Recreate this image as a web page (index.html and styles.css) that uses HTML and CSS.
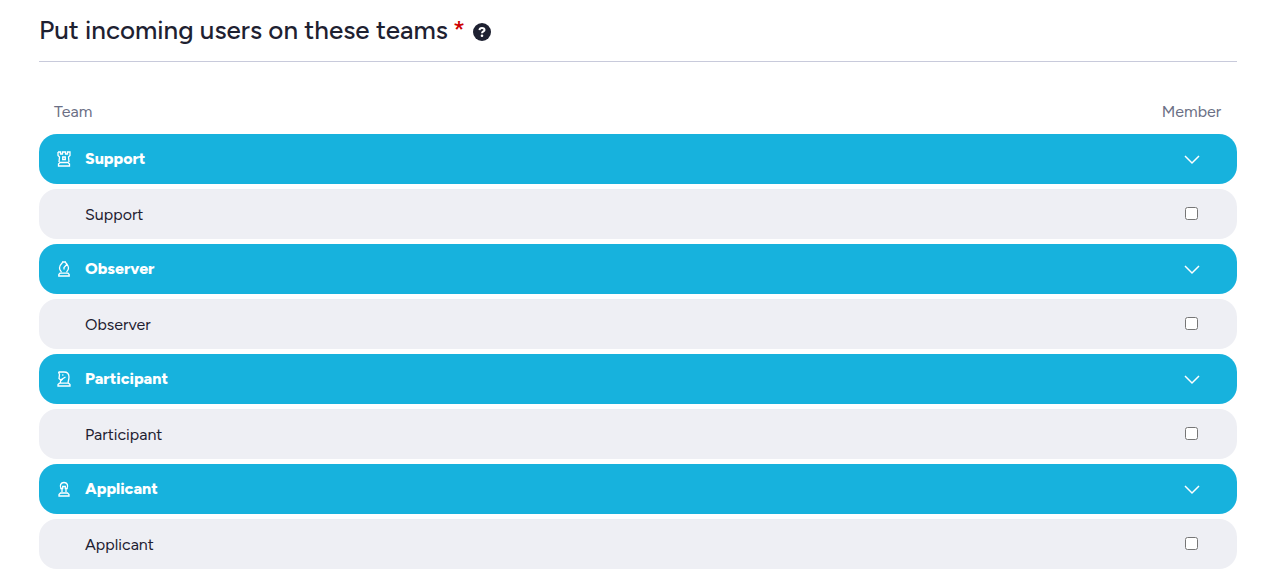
FILE: index.html
```html
<!DOCTYPE html>
<html lang="en">
<head>
  <meta charset="utf-8">
  <title>Incoming users</title>
  <link rel="stylesheet" href="styles.css">
</head>
<body>
  <div class="container">
    <div class="header">
      <h1>Put incoming users on these teams</h1>
      <span class="required">*</span>
      <button type="button" class="help" aria-label="Help">
        <svg viewBox="0 0 18 18" width="18" height="18">
          <circle cx="9" cy="9" r="9" fill="#1e2131"/>
          <path d="M6.500 7.100C6.600 5.500 7.700 4.900 9 4.900s2.500.7 2.500 2C11.500 8.500 9 8.400 9 10.300" fill="none" stroke="#fff" stroke-width="2"/>
          <circle cx="9" cy="12.700" r="1.300" fill="#fff"/>
        </svg>
      </button>
    </div>

    <table class="teams">
      <thead>
        <tr>
          <th class="team-col">Team</th>
          <th class="member-col">Member</th>
        </tr>
      </thead>
      <tbody>
        <tr class="group">
          <th>
            <div class="team-name">
              <svg class="icon" viewBox="0 0 14 16">
                <path d="M1 1h2.500v2h2V1h3v2h2V1H13v3.500L11.500 6l.5 5M1 1v3.500L2.500 6 2 11M5.700 8.500V6h2.600v2.500zM3 11.500h8l1.500 1.500v2h-11v-2z"/>
              </svg>
              Support
            </div>
          </th>
          <td>
            <button type="button" class="toggle" aria-label="Toggle Support teams">
              <svg viewBox="0 0 16 10"><path d="M1 1l7 7 7-7"/></svg>
            </button>
          </td>
        </tr>
        <tr class="team">
          <td><label for="support">Support</label></td>
          <td><input type="checkbox" id="support"></td>
        </tr>

        <tr class="group">
          <th>
            <div class="team-name">
              <svg class="icon" viewBox="0 0 14 16">
                <path d="M5 1h4M5.500 1.500C3.500 3.500 2.500 5 2.500 7c0 1.700.6 2.800 2 4M8.500 1.500L10 3.200 7 6.500v2M10.200 3.500C11 4.700 11.500 5.800 11.500 7c0 1.700-.6 2.800-2 4M3 12.200h8l1.200 1.300V15H1.800v-1.500z"/>
              </svg>
              Observer
            </div>
          </th>
          <td>
            <button type="button" class="toggle" aria-label="Toggle Observer teams">
              <svg viewBox="0 0 16 10"><path d="M1 1l7 7 7-7"/></svg>
            </button>
          </td>
        </tr>
        <tr class="team">
          <td><label for="observer">Observer</label></td>
          <td><input type="checkbox" id="observer"></td>
        </tr>

        <tr class="group">
          <th>
            <div class="team-name">
              <svg class="icon" viewBox="0 0 14 16">
                <path d="M1.500 1H7c3.500 0 5 2 5 5 0 2-.5 3.500-1 5.500M1.500 1l1 2.500L2 7.500 3.500 9 8.500 6M5.200 4h1.200M6 7.800L3.500 10v1.500M2.500 12.200h9L13 13.500V15H1v-1.500z"/>
              </svg>
              Participant
            </div>
          </th>
          <td>
            <button type="button" class="toggle" aria-label="Toggle Participant teams">
              <svg viewBox="0 0 16 10"><path d="M1 1l7 7 7-7"/></svg>
            </button>
          </td>
        </tr>
        <tr class="team">
          <td><label for="participant">Participant</label></td>
          <td><input type="checkbox" id="participant"></td>
        </tr>

        <tr class="group">
          <th>
            <div class="team-name">
              <svg class="icon" viewBox="0 0 14 16">
                <path d="M4 7.500C2.500 4.500 3.700 1.500 7 1.500s4.500 3 3 6M3.200 7.500h2.500V5.500h2.600v2h2.500M5 7.500V11M9 7.500V11M3.500 12h7l1.500 1.500V15H2v-1.500z"/>
              </svg>
              Applicant
            </div>
          </th>
          <td>
            <button type="button" class="toggle" aria-label="Toggle Applicant teams">
              <svg viewBox="0 0 16 10"><path d="M1 1l7 7 7-7"/></svg>
            </button>
          </td>
        </tr>
        <tr class="team">
          <td><label for="applicant">Applicant</label></td>
          <td><input type="checkbox" id="applicant"></td>
        </tr>
      </tbody>
    </table>
  </div>
</body>
</html>
```
FILE: styles.css
```css
:root {
  --accent: #17b2dd;
  --row-bg: #eeeff4;
  --text-dark: #1e2131;
  --text-muted: #6b6f85;
  --line: #c8cadb;
}

body {
  font-family: Figtree, Lato, "Liberation Sans", sans-serif;
  font-size: 16px;
  line-height: 24px;
  color: var(--text-dark);
  background-color: #fff;
  margin: 0;
}

.container {
  padding: 12px 36px 8px 39px;
}

.header {
  display: flex;
  align-items: center;
  padding-bottom: 13px;
  border-bottom: 1px solid var(--line);
  margin-bottom: 32px;
}

h1 {
  font-size: 26px;
  line-height: 36px;
  font-weight: 500;
  margin: 0;
}

.required {
  color: #c00;
  font-size: 26px;
  line-height: 36px;
  font-weight: 500;
  margin-left: 5px;
}

.help {
  display: flex;
  padding: 4px 0 0;
  border: 0;
  background: none;
  margin-left: 8px;
}

.teams {
  width: 100%;
  border-collapse: separate;
  border-spacing: 0 5px;
}

.teams th,
.teams td {
  padding: 0;
  text-align: left;
}

.teams thead th {
  height: 30px;
  line-height: 26px;
  vertical-align: top;
  color: var(--text-muted);
  font-weight: 400;
}

.teams .team-col {
  padding-left: 15px;
}

.teams .member-col {
  width: 91px;
}

.teams tr > :last-child {
  text-align: center;
}

.group > *,
.team > * {
  height: 50px;
}

.group > * {
  background-color: var(--accent);
  color: #fff;
}

.team > * {
  background-color: var(--row-bg);
}

tbody tr > :first-child {
  border-radius: 18px 0 0 18px;
}

tbody tr > :last-child {
  border-radius: 0 18px 18px 0;
}

.team-name {
  display: flex;
  align-items: center;
  gap: 14px;
  padding-left: 18px;
  font-weight: 800;
}

.icon {
  width: 14px;
  height: 16px;
  fill: none;
  stroke: #fff;
  stroke-width: 1.3;
}

.team label {
  display: block;
  padding: 2px 0 0 46px;
}

.toggle {
  display: block;
  margin: 0 auto;
  padding: 2px 0 0;
  border: 0;
  background: none;
}

.toggle svg {
  display: block;
  width: 16px;
  height: 10px;
  fill: none;
  stroke: #fff;
  stroke-width: 1.5;
}

.team input {
  display: block;
  width: 13px;
  height: 13px;
  margin: 0 auto 1px;
}
```
